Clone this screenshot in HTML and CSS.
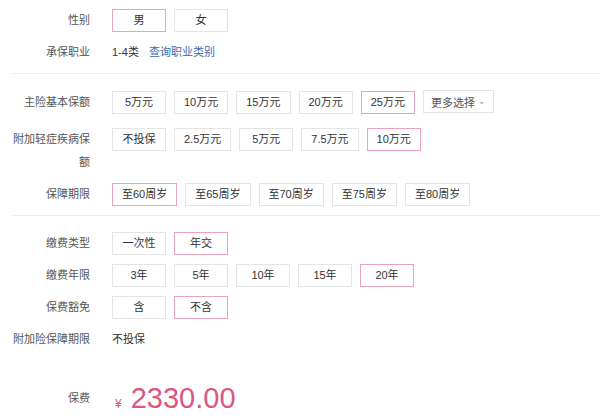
FILE: index.html
```html
<!DOCTYPE html>
<html lang="zh-CN">

    <head>
        <meta charset="UTF-8">
        <meta name="viewport" content="width=device-width, initial-scale=1.0">
        <title>保费计算</title>
        <link rel="stylesheet" href="styles.css">
    </head>

    <body>
        <div class="form">
            <div class="row">
                <div class="label">性别</div>
                <div class="options">
                    <span class="opt active">男</span>
                    <span class="opt">女</span>
                </div>
            </div>
            <div class="row">
                <div class="label">承保职业</div>
                <div class="value">1-4类 <a class="link" href="#">查询职业类别</a></div>
            </div>

            <div class="divider first"></div>

            <div class="row row-wide">
                <div class="label">主险基本保额</div>
                <div class="options">
                    <span class="opt">5万元</span>
                    <span class="opt">10万元</span>
                    <span class="opt">15万元</span>
                    <span class="opt">20万元</span>
                    <span class="opt active">25万元</span>
                    <span class="opt more">更多选择 <span class="chev">&#8964;</span></span>
                </div>
            </div>
            <div class="row">
                <div class="label">附加轻症疾病保额</div>
                <div class="options">
                    <span class="opt">不投保</span>
                    <span class="opt">2.5万元</span>
                    <span class="opt">5万元</span>
                    <span class="opt">7.5万元</span>
                    <span class="opt active">10万元</span>
                </div>
            </div>
            <div class="row">
                <div class="label">保障期限</div>
                <div class="options">
                    <span class="opt active">至60周岁</span>
                    <span class="opt">至65周岁</span>
                    <span class="opt">至70周岁</span>
                    <span class="opt">至75周岁</span>
                    <span class="opt">至80周岁</span>
                </div>
            </div>

            <div class="divider second"></div>

            <div class="row">
                <div class="label">缴费类型</div>
                <div class="options">
                    <span class="opt">一次性</span>
                    <span class="opt active">年交</span>
                </div>
            </div>
            <div class="row">
                <div class="label">缴费年限</div>
                <div class="options">
                    <span class="opt">3年</span>
                    <span class="opt">5年</span>
                    <span class="opt">10年</span>
                    <span class="opt">15年</span>
                    <span class="opt active">20年</span>
                </div>
            </div>
            <div class="row">
                <div class="label">保费豁免</div>
                <div class="options">
                    <span class="opt">含</span>
                    <span class="opt active">不含</span>
                </div>
            </div>
            <div class="row">
                <div class="label">附加险保障期限</div>
                <div class="value">不投保</div>
            </div>

            <div class="row price-row">
                <div class="label">保费</div>
                <div class="price"><span class="yen">¥</span>2330.00</div>
            </div>
        </div>
        <div class="shade"></div>
    </body>

</html>
```

FILE: styles.css
```css
body {
    margin: 0;
    font-family: "Liberation Sans", "Noto Sans CJK SC", sans-serif;
    font-size: 11px;
    color: #333;
    background: #fff;
}

.form {
    padding: 9px 0 0 12px;
}

.row {
    display: flex;
    align-items: flex-start;
    margin-bottom: 9px;
}

.row-wide {
    margin-bottom: 14px;
}

.label {
    width: 78px;
    margin-right: 22px;
    flex-shrink: 0;
    text-align: right;
    line-height: 23px;
    color: #555;
}

.options {
    display: flex;
    gap: 8px;
}

.opt {
    box-sizing: border-box;
    min-width: 54px;
    height: 23px;
    line-height: 21px;
    padding: 0 9px;
    border: 1px solid #e4e4e4;
    text-align: center;
    color: #333;
    cursor: pointer;
}

.opt.active {
    border-color: #eba2bc;
}

.more {
    padding: 0 7px;
    margin-top: -1px;
    color: #555;
}

.chev {
    display: inline-block;
    font-size: 9px;
    color: #999;
    vertical-align: 3px;
}

.value {
    line-height: 23px;
    color: #333;
}

.link {
    margin-left: 7px;
    color: #3a6bb3;
    text-decoration: none;
}

.divider {
    height: 1px;
    background: #ececec;
}

.divider.first {
    margin: 1px 0 17px;
}

.divider.second {
    margin: 3px 0 16px;
}

.price-row {
    margin-top: 32px;
    margin-bottom: 0;
    align-items: center;
}

.price-row .label {
    line-height: 23px;
    margin-bottom: 6px;
}

.price {
    color: #df5581;
    font-size: 29px;
    line-height: 30px;
}

.yen {
    font-size: 12px;
    margin: 0 9px 0 3px;
}

.shade {
    height: 8px;
    background: linear-gradient(#fff, #f1f1f1);
}
```
